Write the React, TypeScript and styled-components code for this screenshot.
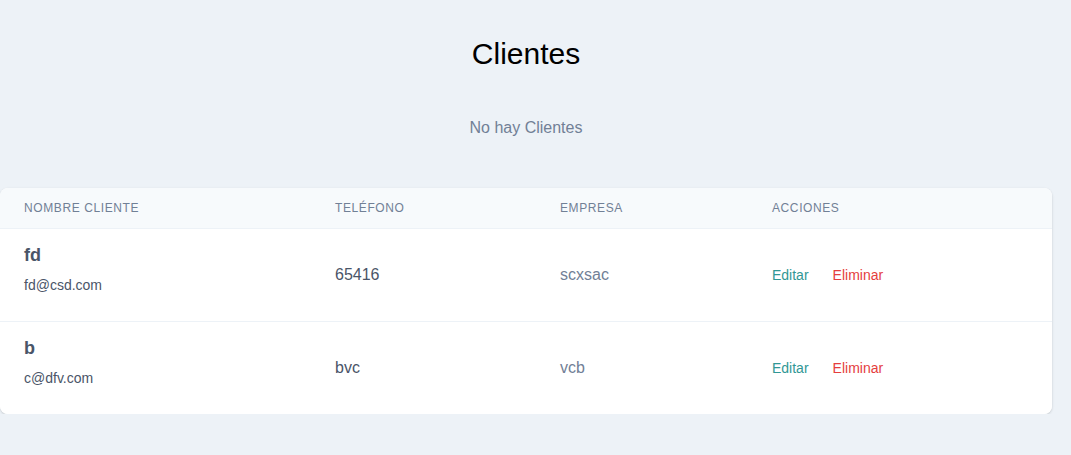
import React from "react";
import styled, { createGlobalStyle } from "styled-components";

const Global = createGlobalStyle`
  html, body {
    margin: 0;
    padding: 0;
    background: #edf2f7;
    font-family: "Liberation Sans", Arial, sans-serif;
  }
`;

const Page = styled.div`
  width: 1052px;
  padding-top: 36px;
  display: flex;
  flex-direction: column;
  align-items: stretch;
`;

const Title = styled.h1`
  margin: 0;
  font-size: 30px;
  line-height: 36px;
  font-weight: 400;
  color: #000;
  text-align: center;
`;

const Empty = styled.p`
  margin: 44px 0 0;
  font-size: 16px;
  line-height: 24px;
  color: #718096;
  text-align: center;
`;

const Card = styled.div`
  margin-top: 48px;
  background: #fff;
  border-radius: 8px;
  overflow: hidden;
  box-shadow: 0 1px 3px rgba(0, 0, 0, 0.12), 0 1px 2px rgba(0, 0, 0, 0.06);
`;

const Row = styled.div<{ $head?: boolean }>`
  display: grid;
  grid-template-columns: 311px 225px 212px 1fr;
  align-items: center;
  background: ${(p) => (p.$head ? "#f7fafc" : "#fff")};
  & + & {
    border-top: 1px solid #edf2f7;
  }
`;

const HeadCell = styled.div`
  padding: 12px 24px;
  font-size: 12px;
  line-height: 16px;
  letter-spacing: 0.05em;
  text-transform: uppercase;
  color: #718096;
`;

const NameCell = styled.div`
  padding: 12px 24px 26px;
  display: flex;
  flex-direction: column;
`;

const Name = styled.div`
  font-size: 18px;
  line-height: 28px;
  font-weight: 700;
  color: #4a5568;
`;

const Email = styled.div`
  margin-top: 6px;
  font-size: 14px;
  line-height: 20px;
  color: #4a5568;
`;

const Cell = styled.div<{ $muted?: boolean }>`
  padding: 0 24px;
  font-size: 16px;
  line-height: 24px;
  color: ${(p) => (p.$muted ? "#718096" : "#4a5568")};
`;

const Actions = styled.div`
  padding: 0 24px;
  display: flex;
  gap: 24px;
`;

const Action = styled.a<{ $danger?: boolean }>`
  font-size: 14px;
  line-height: 20px;
  text-decoration: none;
  cursor: pointer;
  color: ${(p) => (p.$danger ? "#e53e3e" : "#319795")};
`;

const clients = [
  { name: "fd", email: "fd@csd.com", phone: "65416", company: "scxsac" },
  { name: "b", email: "c@dfv.com", phone: "bvc", company: "vcb" },
];

export default function App() {
  return (
    <>
      <Global />
      <Page>
        <Title>Clientes</Title>
        <Empty>No hay Clientes</Empty>
        <Card>
          <Row $head>
            <HeadCell>Nombre Cliente</HeadCell>
            <HeadCell>Teléfono</HeadCell>
            <HeadCell>Empresa</HeadCell>
            <HeadCell>Acciones</HeadCell>
          </Row>
          {clients.map((c) => (
            <Row key={c.email}>
              <NameCell>
                <Name>{c.name}</Name>
                <Email>{c.email}</Email>
              </NameCell>
              <Cell>{c.phone}</Cell>
              <Cell $muted>{c.company}</Cell>
              <Actions>
                <Action>Editar</Action>
                <Action $danger>Eliminar</Action>
              </Actions>
            </Row>
          ))}
        </Card>
      </Page>
    </>
  );
}
